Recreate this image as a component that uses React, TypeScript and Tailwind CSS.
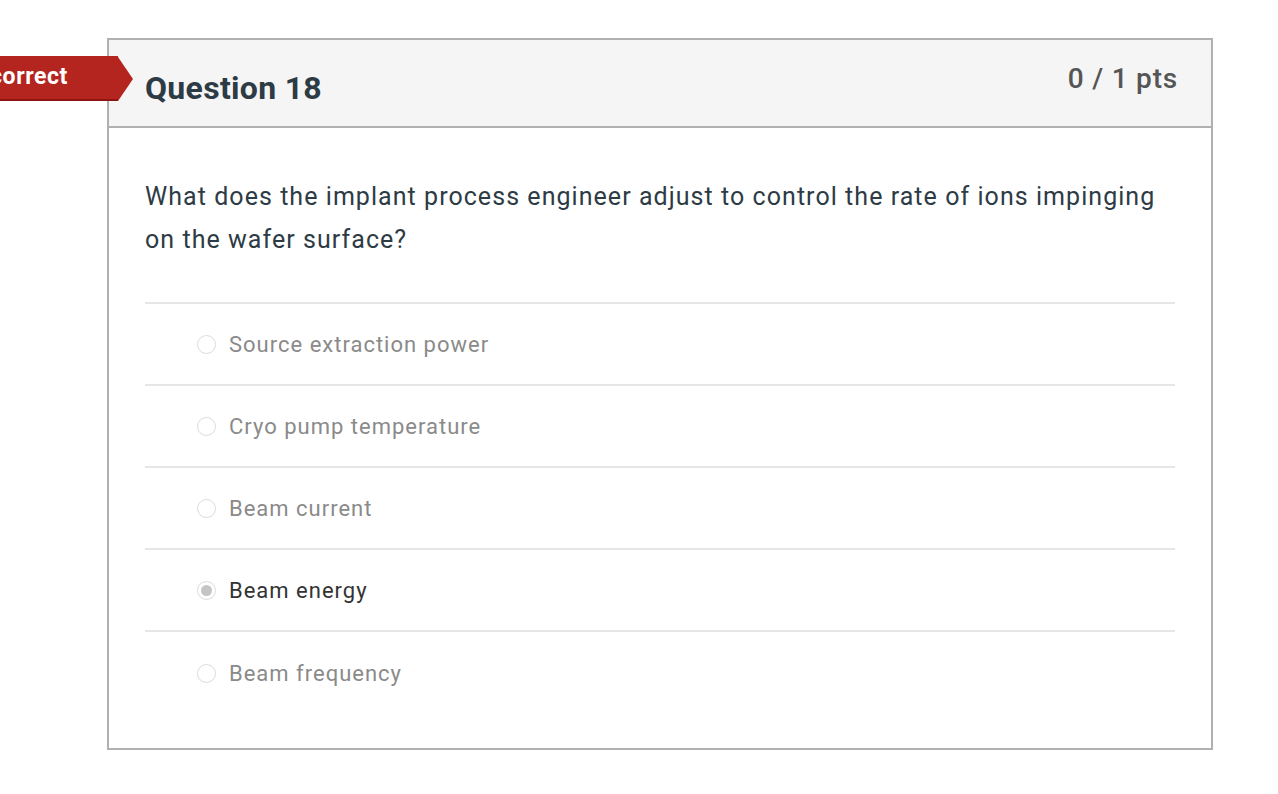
const answers = [
  { label: 'Source extraction power', selected: false },
  { label: 'Cryo pump temperature', selected: false },
  { label: 'Beam current', selected: false },
  { label: 'Beam energy', selected: true },
  { label: 'Beam frequency', selected: false },
];

const Radio = ({ checked }: { checked: boolean }) => (
  <span className="flex h-[19px] w-[19px] shrink-0 items-center justify-center rounded-full border border-[#dcdcdc] bg-white">
    {checked && <span className="h-[11px] w-[11px] rounded-full bg-[#c4c4c4]" />}
  </span>
);

export default function App() {
  return (
    <div className="min-h-[794px] w-[1278px] overflow-hidden bg-white pl-[107px] pt-[38px] font-['Roboto',sans-serif]">
      <div className="relative w-[1106px] border-2 border-[#b0b0b0] bg-white">
        {/* result banner, clipped by the page edge */}
        <div className="absolute left-[-279px] top-[16px] flex h-[45px] items-center">
          <div className="flex h-[45px] w-[288px] items-center justify-end border-b-2 border-[#8e1512] bg-[#b42520] pr-[50px] text-[23px] font-bold tracking-[0.6px] text-white">
            Incorrect
          </div>
          <div className="h-0 w-0 border-y-[22.5px] border-l-[15px] border-y-transparent border-l-[#b42520]" />
        </div>

        <div className="flex h-[88px] items-start justify-between border-b-2 border-[#b0b0b0] bg-[#f5f5f5] pl-[36px] pr-[33px]">
          <h2 className="pt-[29px] text-[32px] font-bold leading-[38px] tracking-[0.3px] text-[#2d3b45]">Question 18</h2>
          <div className="pt-[21px] text-[28px] font-medium leading-[36px] tracking-[0.8px] text-[#555]">0 / 1 pts</div>
        </div>

        <div className="px-[36px] pb-[34px] pt-[47px]">
          <p className="text-[25px] leading-[43px] tracking-[1.05px] text-[#2d3b45]">
            What does the implant process engineer adjust to control the rate of ions impinging on the wafer surface?
          </p>
          <div className="mt-[41px] border-t-2 border-[#e6e6e6]">
            {answers.map((a, i) => (
              <div
                key={a.label}
                className={`flex h-[82px] items-center gap-[13px] pl-[52px] ${i < answers.length - 1 ? 'border-b-2 border-[#e6e6e6]' : ''}`}
              >
                <Radio checked={a.selected} />
                <span className={`text-[22px] tracking-[1px] ${a.selected ? 'text-[#333]' : 'text-[#8a8a8a]'}`}>
                  {a.label}
                </span>
              </div>
            ))}
          </div>
        </div>
      </div>
    </div>
  );
}
